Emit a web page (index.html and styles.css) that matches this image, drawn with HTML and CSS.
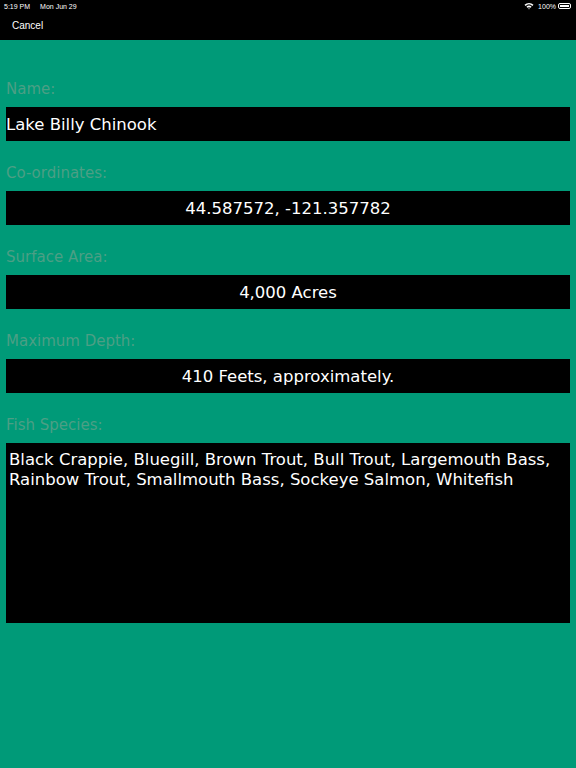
FILE: index.html
```html
<!DOCTYPE html>
<html>
<head>
<meta charset="utf-8">
<link rel="stylesheet" href="styles.css">
</head>
<body>
<div class="topbar">
  <div class="status">
    <div class="status-left"><span>5:19 PM</span><span>Mon Jun 29</span></div>
    <div class="status-right">
      <svg class="wifi" width="10" height="8" viewBox="0 0 10 8"><path d="M0.5 2.8 A6.5 6.5 0 0 1 9.5 2.8 L8.4 3.9 A5 5 0 0 0 1.6 3.9 Z M2.4 4.7 A4 4 0 0 1 7.6 4.7 L6.5 5.8 A2.5 2.5 0 0 0 3.5 5.8 Z M4.2 6.6 A1.2 1.2 0 0 1 5.8 6.6 L5 7.5 Z" fill="#fff"/></svg>
      <span>100%</span>
      <span class="battery"><span class="battery-fill"></span></span>
    </div>
  </div>
  <div class="nav"><span class="cancel">Cancel</span></div>
</div>
<main class="form">
  <div class="field">
    <div class="label">Name:</div>
    <div class="box left">Lake Billy Chinook</div>
  </div>
  <div class="field">
    <div class="label">Co-ordinates:</div>
    <div class="box">44.587572, -121.357782</div>
  </div>
  <div class="field">
    <div class="label">Surface Area:</div>
    <div class="box">4,000 Acres</div>
  </div>
  <div class="field">
    <div class="label">Maximum Depth:</div>
    <div class="box">410 Feets, approximately.</div>
  </div>
  <div class="field">
    <div class="label">Fish Species:</div>
    <div class="area">Black Crappie, Bluegill, Brown Trout, Bull Trout, Largemouth Bass, Rainbow Trout, Smallmouth Bass, Sockeye Salmon, Whitefish</div>
  </div>
</main>
</body>
</html>
```
FILE: styles.css
```css
html, body {
  margin: 0;
  padding: 0;
}
body {
  width: 576px;
  height: 768px;
  background: #009a78;
  font-family: "DejaVu Sans", Verdana, sans-serif;
  overflow: hidden;
}
.topbar {
  background: #000;
  height: 40px;
  color: #fff;
  font-family: "Liberation Sans", Arial, sans-serif;
}
.status {
  height: 12px;
  display: flex;
  justify-content: space-between;
  align-items: center;
  padding: 0 5px 0 4px;
  font-size: 7px;
}
.status-left {
  display: flex;
  gap: 10px;
}
.status-right {
  display: flex;
  align-items: center;
  gap: 2px;
}
.wifi {
  margin-right: 2px;
}
.battery {
  width: 13px;
  height: 6px;
  border: 1px solid #fff;
  border-radius: 2px;
  padding: 1px;
  box-sizing: border-box;
  display: flex;
}
.battery-fill {
  flex: 1;
  background: #fff;
}
.nav {
  height: 28px;
  display: flex;
  align-items: center;
  padding-left: 12px;
  padding-bottom: 2px;
  box-sizing: border-box;
}
.cancel {
  font-size: 10px;
}
.form {
  padding: 40px 6px 0 6px;
  display: flex;
  flex-direction: column;
  gap: 23px;
}
.field {
  display: flex;
  flex-direction: column;
  gap: 8px;
}
.label {
  color: #4c9f85;
  font-size: 15px;
  line-height: 19px;
  height: 19px;
}
.box {
  background: #000;
  color: #fff;
  height: 34px;
  display: flex;
  align-items: center;
  justify-content: center;
  font-size: 16.5px;
}
.box.left {
  justify-content: flex-start;
  padding-left: 0;
}
.area {
  background: #000;
  color: #fff;
  height: 180px;
  box-sizing: border-box;
  padding: 7px 3px;
  font-size: 16.5px;
  line-height: 20px;
}
```
